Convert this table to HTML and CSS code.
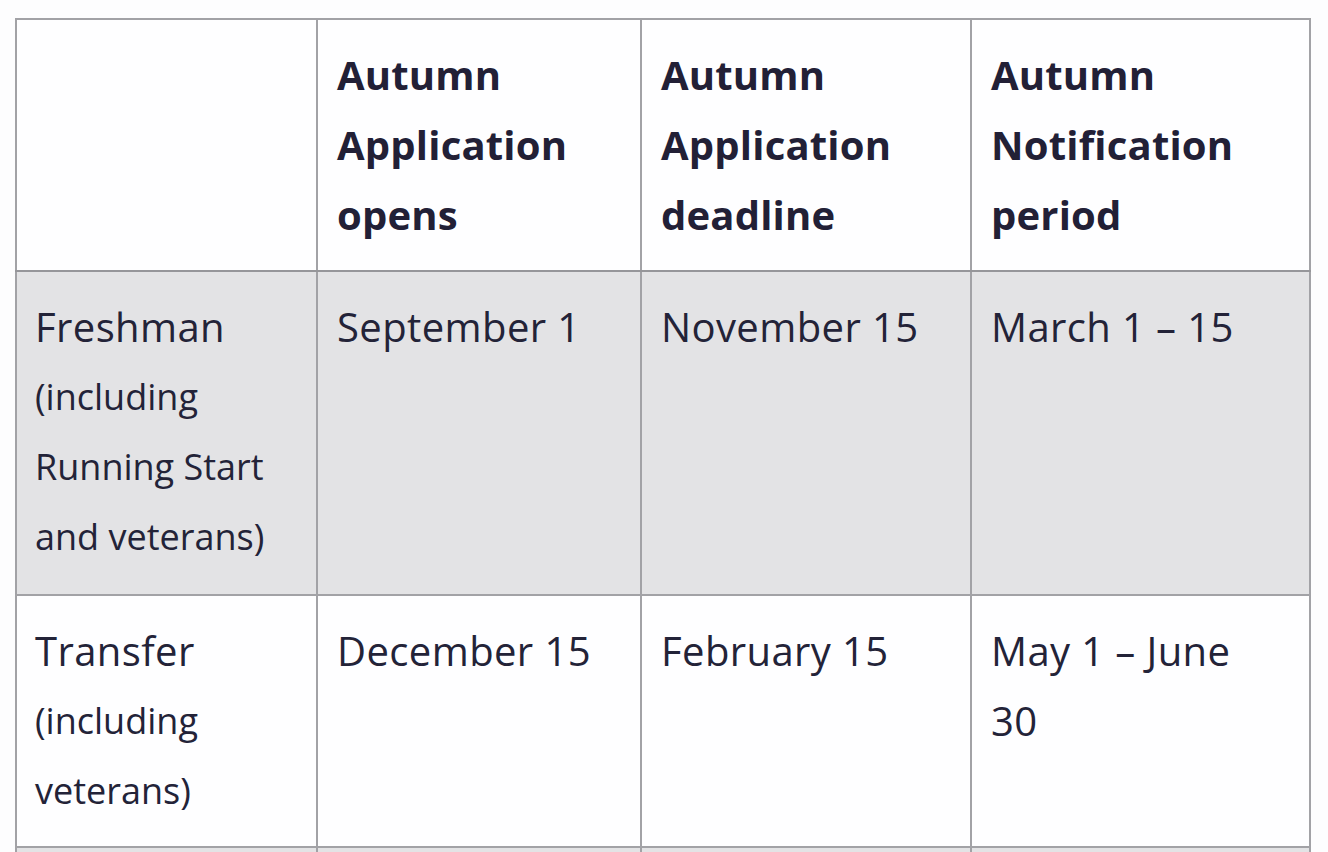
FILE: index.html
```html
<!DOCTYPE html>
<html>
<head>
<meta charset="utf-8">
<link rel="stylesheet" href="styles.css">
</head>
<body>
<table class="dates">
  <colgroup>
    <col class="c1"><col class="c2"><col class="c3"><col class="c4">
  </colgroup>
  <thead>
    <tr>
      <th class="label"></th>
      <th>Autumn Application opens</th>
      <th>Autumn Application deadline</th>
      <th>Autumn Notification period</th>
    </tr>
  </thead>
  <tbody>
    <tr class="alt">
      <td class="label">Freshman (including Running Start and veterans)</td>
      <td>September 1</td>
      <td>November 15</td>
      <td>March 1 – 15</td>
    </tr>
    <tr>
      <td class="label">Transfer (including veterans)</td>
      <td>December 15</td>
      <td>February 15</td>
      <td>May 1 – June 30</td>
    </tr>
    <tr class="alt">
      <td class="label">&nbsp;</td>
      <td>&nbsp;</td>
      <td>&nbsp;</td>
      <td>&nbsp;</td>
    </tr>
  </tbody>
</table>
</body>
</html>
```
FILE: styles.css
```css
html, body {
  margin: 0;
  padding: 0;
  background: #fdfdfe;
}
body {
  padding: 18px 0 0 15px;
  font-family: "Open Sans", "Noto Sans", sans-serif;
  color: #232338;
}
.dates {
  border-collapse: collapse;
  table-layout: fixed;
  width: 1294px;
  background: #fefeff;
}
.c1 { width: 301px; }
.c2 { width: 324px; }
.c3 { width: 330px; }
.c4 { width: 339px; }
.dates th,
.dates td {
  border: 2px solid #a2a2a6;
  padding: 20px 36px 20px 19px;
  font-size: 40px;
  line-height: 70px;
  text-align: left;
  vertical-align: top;
}
.dates th {
  font-weight: 700;
  color: #222036;
  letter-spacing: 0.2px;
}
.dates td {
  font-weight: 400;
  letter-spacing: 0.4px;
}
.dates td.label {
  padding-left: 18px;
  font-size: 36px;
  letter-spacing: 0;
}
.dates td.label::first-line {
  font-size: 40px;
  letter-spacing: 0.4px;
}
.dates thead th {
  border-bottom-color: #96969a;
}
.alt td {
  background: #e3e3e5;
  padding-bottom: 22px;
}
```
